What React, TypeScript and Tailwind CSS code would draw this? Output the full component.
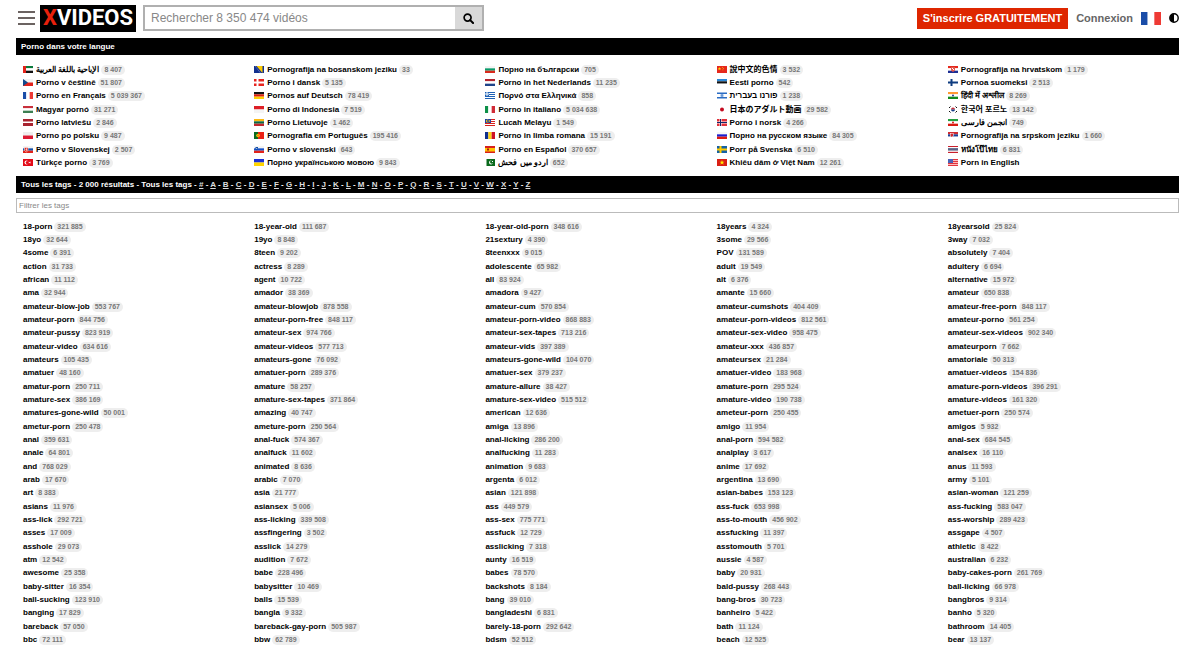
import type { ReactNode } from 'react'

type Item = { name: string; count?: string }
type Language = Item & { flag: string }

// Flags are drawn on a 20x14 canvas
function Rows({ colors }: { colors: string[] }) {
  const h = 14 / colors.length
  return (
    <>
      {colors.map((color, i) => (
        <rect key={i} y={i * h} width="20" height={h} fill={color} />
      ))}
    </>
  )
}

function Cols({ colors }: { colors: string[] }) {
  const w = 20 / colors.length
  return (
    <>
      {colors.map((color, i) => (
        <rect key={i} x={i * w} width={w} height="14" fill={color} />
      ))}
    </>
  )
}

function Cross({ bg, color, inner }: { bg: string; color: string; inner?: string }) {
  return (
    <>
      <rect width="20" height="14" fill={bg} />
      <path d="M5 0h4v14h-4zM0 5h20v4H0z" fill={color} />
      {inner && <path d="M6 0h2v14h-2zM0 6h20v2H0z" fill={inner} />}
    </>
  )
}

const flags: Record<string, ReactNode> = {
  ae: (
    <>
      <Rows colors={['#0b7a3b', '#ffffff', '#111111']} />
      <rect width="6" height="14" fill="#e2231a" />
    </>
  ),
  ba: (
    <>
      <rect width="20" height="14" fill="#12308f" />
      <path d="M5 0h12v14z" fill="#fecb00" />
      <path d="M3 1l10 13" stroke="#ffffff" strokeDasharray="1.5 1.5" />
    </>
  ),
  bg: <Rows colors={['#f4f4f4', '#0b9b6b', '#d9291c']} />,
  cn: (
    <>
      <rect width="20" height="14" fill="#e6281c" />
      <path d="M5 2l1 2.500h2.500l-2 1.500 .8 2.500L5 7l-2.300 1.500 .8-2.500-2-1.500H4z" fill="#ffde00" />
      <path d="M10 2h1.500v1.500H10zM12 4h1.500v1.500H12zM11 7h1.500v1.500H11z" fill="#ffde00" />
    </>
  ),
  hr: (
    <>
      <Rows colors={['#e6281c', '#ffffff', '#1d2f94']} />
      <path d="M6 2h8v7l-4 3-4-3z" fill="#e2574c" />
      <path d="M8 4h2v2H8zM10 6h2v2h-2z" fill="#ffffff" />
    </>
  ),
  cz: (
    <>
      <Rows colors={['#f4f4f4', '#e0221b']} />
      <path d="M0 0l10 7-10 7z" fill="#124a8c" />
    </>
  ),
  dk: <Cross bg="#e6231e" color="#ffffff" />,
  nl: <Rows colors={['#b3242e', '#ffffff', '#1f4489']} />,
  ee: <Rows colors={['#2a87d6', '#111111', '#ffffff']} />,
  fi: <Cross bg="#ffffff" color="#0f3c80" />,
  fr: <Cols colors={['#1a4da8', '#ffffff', '#ee3a34']} />,
  de: <Rows colors={['#111111', '#dd1f10', '#ffce00']} />,
  gr: (
    <>
      <Rows colors={['#1f62b5', '#fff', '#1f62b5', '#fff', '#1f62b5', '#fff', '#1f62b5']} />
      <rect width="8" height="8" fill="#1f62b5" />
      <path d="M3 0h2v8H3zM0 3h8v2H0z" fill="#ffffff" />
    </>
  ),
  il: (
    <>
      <rect width="20" height="14" fill="#ffffff" />
      <path d="M0 1h20v3H0zM0 10h20v3H0z" fill="#2a6cc4" />
      <path d="M10 4.500l2.500 4h-5zM10 9.500l-2.500-4h5z" fill="none" stroke="#2a6cc4" />
    </>
  ),
  in: (
    <>
      <Rows colors={['#ff9933', '#ffffff', '#128a1c']} />
      <circle cx="10" cy="7" r="2" fill="#2a3b98" />
    </>
  ),
  hu: <Rows colors={['#c8303c', '#ffffff', '#3c7f52']} />,
  id: <Rows colors={['#dd1f26', '#f4f4f4']} />,
  it: <Cols colors={['#0d9048', '#ffffff', '#d02a36']} />,
  jp: (
    <>
      <rect width="20" height="14" fill="#ffffff" />
      <circle cx="10" cy="7" r="4" fill="#c40b20" />
    </>
  ),
  kr: (
    <>
      <rect width="20" height="14" fill="#ffffff" />
      <path d="M6 7a4 4 0 0 1 8 0z" fill="#c8303c" />
      <path d="M6 7a4 4 0 0 0 8 0z" fill="#153f88" />
      <path d="M2 4l3-3M15 1l3 3M2 10l3 3M15 13l3-3" stroke="#111111" strokeWidth="2" />
    </>
  ),
  lv: (
    <>
      <rect width="20" height="14" fill="#a8232f" />
      <rect y="5" width="20" height="3" fill="#ffffff" />
    </>
  ),
  lt: <Rows colors={['#fdb913', '#0a6a44', '#c1272d']} />,
  my: (
    <>
      <Rows colors={['#d8201c', '#fff', '#d8201c', '#fff', '#d8201c', '#fff', '#d8201c']} />
      <rect width="12" height="8" fill="#1c3fa8" />
      <circle cx="5" cy="4" r="3" fill="#ffcc00" />
      <circle cx="6" cy="4" r="2" fill="#1c3fa8" />
      <circle cx="9" cy="4" r="1.500" fill="#ffcc00" />
    </>
  ),
  no: <Cross bg="#e0303a" color="#ffffff" inner="#12286a" />,
  ir: (
    <>
      <Rows colors={['#239f40', '#ffffff', '#da1a10']} />
      <circle cx="10" cy="7" r="2" fill="#da1a10" />
    </>
  ),
  pl: <Rows colors={['#eeeeee', '#dc1a34']} />,
  pt: (
    <>
      <rect width="20" height="14" fill="#ea2014" />
      <rect width="8" height="14" fill="#0b6a20" />
      <circle cx="8" cy="7" r="3.500" fill="#ffe000" />
      <rect x="7" y="5" width="2" height="4" fill="#ea2014" />
    </>
  ),
  ro: <Cols colors={['#10308f', '#fcd116', '#ce1126']} />,
  ru: <Rows colors={['#f6f6f6', '#1a1fd0', '#e01a10']} />,
  rs: (
    <>
      <Rows colors={['#d02a30', '#1c3f96', '#ffffff']} />
      <path d="M4 2h7v6l-3.500 4L4 8z" fill="#ffffff" />
      <path d="M5 3h5v5l-2.500 2L5 8z" fill="#d02a30" />
    </>
  ),
  sk: (
    <>
      <Rows colors={['#f4f4f4', '#1450a8', '#e2231a']} />
      <path d="M3 3h7v6l-3.500 3L3 9z" fill="#e2231a" stroke="#ffffff" />
      <path d="M6 4h1v6H6zM5 6h3v1H5z" fill="#ffffff" />
    </>
  ),
  si: (
    <>
      <Rows colors={['#f4f4f4', '#1450c8', '#e2231a']} />
      <path d="M3 2h5v4l-2.500 3L3 6z" fill="#1450a8" />
      <path d="M4 6l1.500-2L7 6z" fill="#ffffff" />
    </>
  ),
  es: (
    <>
      <rect width="20" height="14" fill="#d8201c" />
      <rect y="4" width="20" height="7" fill="#ffc400" />
      <rect x="4" y="5" width="4" height="4" fill="#ad1519" />
    </>
  ),
  se: <Cross bg="#1461a6" color="#fecc00" />,
  vn: (
    <>
      <rect width="20" height="14" fill="#da1f14" />
      <path d="M10 2l1.300 3.500H15l-3 2.200 1.200 3.800L10 9.200l-3.200 2.300L8 7.700 5 5.500h3.700z" fill="#ffee00" />
    </>
  ),
  th: <Rows colors={['#c8202c', '#fff', '#24305e', '#24305e', '#fff', '#c8202c']} />,
  tr: (
    <>
      <rect width="20" height="14" fill="#e30a17" />
      <circle cx="7" cy="7" r="4" fill="#ffffff" />
      <circle cx="8.500" cy="7" r="3" fill="#e30a17" />
      <path d="M11 7l4-2v4z" fill="#ffffff" />
    </>
  ),
  ua: <Rows colors={['#1a2fd8', '#ffd500']} />,
  pk: (
    <>
      <rect x="3" width="17" height="14" fill="#0a6a1c" />
      <circle cx="12" cy="7" r="4" fill="#ffffff" />
      <circle cx="13.500" cy="6" r="3.500" fill="#0a6a1c" />
      <rect x="14" y="4" width="2" height="2" fill="#ffffff" />
    </>
  ),
  us: (
    <>
      <Rows colors={['#e0353f', '#fbb', '#e0353f', '#fbb', '#e0353f', '#fbb', '#e0353f']} />
      <rect width="10" height="8" fill="#4a63b8" />
    </>
  ),
}

const languages: Language[] = [
  { flag: 'ae', name: 'الإباحية باللغة العربية', count: '8 407' },
  { flag: 'ba', name: 'Pornografija na bosanskom jeziku', count: '33' },
  { flag: 'bg', name: 'Порно на български', count: '705' },
  { flag: 'cn', name: '說中文的色情', count: '3 532' },
  { flag: 'hr', name: 'Pornografija na hrvatskom', count: '1 179' },
  { flag: 'cz', name: 'Porno v češtině', count: '51 807' },
  { flag: 'dk', name: 'Porno i dansk', count: '5 135' },
  { flag: 'nl', name: 'Porno in het Nederlands', count: '11 235' },
  { flag: 'ee', name: 'Eesti porno', count: '542' },
  { flag: 'fi', name: 'Pornoa suomeksi', count: '2 513' },
  { flag: 'fr', name: 'Porno en Français', count: '5 039 367' },
  { flag: 'de', name: 'Pornos auf Deutsch', count: '78 419' },
  { flag: 'gr', name: 'Πορνό στα Ελληνικά', count: '858' },
  { flag: 'il', name: 'פורנו בעברית', count: '1 238' },
  { flag: 'in', name: 'हिंदी में अश्लील', count: '8 269' },
  { flag: 'hu', name: 'Magyar pornó', count: '31 271' },
  { flag: 'id', name: 'Porno di Indonesia', count: '7 519' },
  { flag: 'it', name: 'Porno in italiano', count: '5 034 638' },
  { flag: 'jp', name: '日本のアダルト動画', count: '29 582' },
  { flag: 'kr', name: '한국어 포르노', count: '13 142' },
  { flag: 'lv', name: 'Porno latviešu', count: '2 846' },
  { flag: 'lt', name: 'Porno Lietuvoje', count: '1 462' },
  { flag: 'my', name: 'Lucah Melayu', count: '1 549' },
  { flag: 'no', name: 'Porno i norsk', count: '4 266' },
  { flag: 'ir', name: 'انجمن فارسی', count: '749' },
  { flag: 'pl', name: 'Porno po polsku', count: '9 487' },
  { flag: 'pt', name: 'Pornografia em Português', count: '195 416' },
  { flag: 'ro', name: 'Porno in limba romana', count: '15 191' },
  { flag: 'ru', name: 'Порно на русском языке', count: '84 305' },
  { flag: 'rs', name: 'Pornografija na srpskom jeziku', count: '1 660' },
  { flag: 'sk', name: 'Porno v Slovenskej', count: '2 507' },
  { flag: 'si', name: 'Porno v slovenski', count: '643' },
  { flag: 'es', name: 'Porno en Español', count: '370 657' },
  { flag: 'se', name: 'Porr på Svenska', count: '6 510' },
  { flag: 'th', name: 'หนังโป๊ไทย', count: '6 831' },
  { flag: 'tr', name: 'Türkçe porno', count: '3 769' },
  { flag: 'ua', name: 'Порно українською мовою', count: '9 843' },
  { flag: 'pk', name: 'اردو میں فحش', count: '652' },
  { flag: 'vn', name: 'Khiêu dâm ở Việt Nam', count: '12 261' },
  { flag: 'us', name: 'Porn in English' },
]

// One line per row of five tags, "name count" pairs
const tags: Item[] = `
18-porn 321 885|18-year-old 111 687|18-year-old-porn 348 616|18years 4 324|18yearsold 25 824
18yo 32 644|19yo 8 848|21sextury 4 390|3some 29 566|3way 7 032
4some 6 391|8teen 9 202|8teenxxx 9 015|POV 131 589|absolutely 7 404
action 31 733|actress 8 289|adolescente 65 982|adult 19 549|adultery 6 694
african 11 112|agent 10 722|all 83 924|alt 6 376|alternative 15 972
ama 32 944|amador 38 369|amadora 9 427|amante 15 660|amateur 650 838
amateur-blow-job 553 767|amateur-blowjob 878 558|amateur-cum 570 854|amateur-cumshots 404 409|amateur-free-porn 848 117
amateur-porn 844 756|amateur-porn-free 848 117|amateur-porn-video 868 883|amateur-porn-videos 812 561|amateur-porno 561 254
amateur-pussy 823 919|amateur-sex 974 766|amateur-sex-tapes 713 216|amateur-sex-video 958 475|amateur-sex-videos 902 340
amateur-video 634 616|amateur-videos 577 713|amateur-vids 397 389|amateur-xxx 436 857|amateurporn 7 662
amateurs 105 435|amateurs-gone 76 092|amateurs-gone-wild 104 070|amateursex 21 284|amatoriale 50 313
amatuer 48 160|amatuer-porn 289 376|amatuer-sex 379 237|amatuer-video 183 968|amatuer-videos 154 836
amatur-porn 250 711|amature 58 257|amature-allure 38 427|amature-porn 295 524|amature-porn-videos 396 291
amature-sex 386 169|amature-sex-tapes 371 864|amature-sex-video 515 512|amature-video 190 738|amature-videos 161 320
amatures-gone-wild 50 001|amazing 40 747|american 12 636|ameteur-porn 250 455|ametuer-porn 250 574
ametur-porn 250 478|ameture-porn 250 564|amiga 13 896|amigo 11 954|amigos 5 932
anal 359 631|anal-fuck 574 367|anal-licking 286 200|anal-porn 594 582|anal-sex 684 545
anale 64 801|analfuck 11 602|analfucking 11 283|analplay 3 617|analsex 16 110
and 768 029|animated 8 636|animation 9 683|anime 17 692|anus 11 593
arab 17 670|arabic 7 070|argenta 6 012|argentina 13 690|army 5 101
art 8 383|asia 21 777|asian 121 898|asian-babes 153 123|asian-woman 121 259
asians 11 976|asiansex 5 006|ass 449 579|ass-fuck 653 998|ass-fucking 583 047
ass-lick 292 721|ass-licking 339 508|ass-sex 775 771|ass-to-mouth 456 902|ass-worship 289 423
asses 17 009|assfingering 3 502|assfuck 12 729|assfucking 11 397|assgape 4 507
asshole 29 073|asslick 14 279|asslicking 7 318|asstomouth 5 701|athletic 8 422
atm 12 542|audition 7 672|aunty 16 519|aussie 4 587|australian 6 232
awesome 25 358|babe 228 496|babes 78 570|baby 20 931|baby-cakes-porn 261 769
baby-sitter 16 354|babysitter 10 469|backshots 8 184|bald-pussy 268 443|ball-licking 66 978
ball-sucking 123 910|balls 15 539|bang 39 010|bang-bros 30 723|bangbros 9 314
banging 17 829|bangla 9 332|bangladeshi 6 831|banheiro 5 422|banho 5 320
bareback 57 050|bareback-gay-porn 505 987|barely-18-porn 292 642|bath 11 124|bathroom 14 405
bbc 72 111|bbw 62 789|bdsm 52 512|beach 12 525|bear 13 137
`
  .trim()
  .split(/[|\n]/)
  .map((entry) => {
    const space = entry.indexOf(' ')
    return { name: entry.slice(0, space), count: entry.slice(space + 1) }
  })

const letters = '#ABCDEFGHIJKLMNOPQRSTUVWXYZ'.split('')

function Flag({ code, className }: { code: string; className: string }) {
  return (
    <svg viewBox="0 0 20 14" preserveAspectRatio="none" className={className} aria-hidden="true">
      {flags[code]}
    </svg>
  )
}

function TagItem({ name, count, flag }: Item & { flag?: string }) {
  return (
    <li className="h-[13px] nth-[15n]:mb-px">
      <a href="#" className="flex h-[13px] items-center whitespace-nowrap">
        {flag && <Flag code={flag} className="mr-[3px] h-[7px] w-[10px] shrink-0" />}
        <bdi className="leading-[13px]">{name}</bdi>
        {count && (
          <span className="ml-0.5 rounded-full bg-[#eee] px-[3px] text-[7px] leading-[10px] text-[#777]">
            {count}
          </span>
        )}
      </a>
    </li>
  )
}

function Header() {
  return (
    <header className="mb-0.5 flex h-9 items-center">
      <button type="button" aria-label="Menu" className="mr-1 flex w-5 flex-col items-center gap-1">
        <span className="h-0.5 w-[17px] bg-[#6b6361]" />
        <span className="h-0.5 w-[17px] bg-[#6b6361]" />
        <span className="h-0.5 w-[17px] bg-[#6b6361]" />
      </button>
      <a
        href="#"
        className="mr-[7px] flex h-[27px] w-24 items-center justify-center bg-black font-[Roboto,sans-serif] text-[22px] leading-none font-bold text-white"
      >
        <span className="text-[#e8200c]">X</span>VIDEOS
      </a>
      <form className="flex h-[26px] w-[341px] border-2 border-[#b0b0b0]" onSubmit={(e) => e.preventDefault()}>
        <input
          type="text"
          aria-label="Rechercher"
          placeholder="Rechercher 8 350 474 vidéos"
          className="min-w-0 flex-1 px-1.5 text-xs font-normal outline-none placeholder:text-[#888]"
        />
        <button type="submit" aria-label="Lancer la recherche" className="flex w-[27px] items-center justify-center bg-[#d9d9d9]">
          <svg viewBox="0 0 12 12" className="size-[11px]" fill="none" stroke="#000" aria-hidden="true">
            <circle cx="5" cy="5" r="3.800" strokeWidth="1.800" />
            <path d="M7.800 7.800l3.200 3.200" strokeWidth="2.200" strokeLinecap="round" />
          </svg>
        </button>
      </form>
      <div className="ml-auto flex items-center gap-2 text-[11px] font-bold">
        <a href="#" className="flex h-[21px] items-center bg-[#de2600] px-1.5 text-white">
          S'inscrire GRATUITEMENT
        </a>
        <a href="#" className="text-[#666]">
          Connexion
        </a>
        <button type="button" aria-label="Français">
          <Flag code="fr" className="h-[13px] w-5" />
        </button>
        <button type="button" aria-label="Thème">
          <svg viewBox="0 0 10 10" className="size-[10px]" aria-hidden="true">
            <circle cx="5" cy="5" r="4.200" fill="#fff" stroke="#000" strokeWidth="1.400" />
            <path d="M5 1a4 4 0 0 0 0 8z" fill="#000" />
          </svg>
        </button>
      </div>
    </header>
  )
}

export default function App() {
  return (
    <div className="bg-white pr-[21px] pl-4 font-['Liberation_Sans','Noto_Sans_CJK_TC','Noto_Sans_CJK_JP','Noto_Sans_CJK_KR',sans-serif] text-[8px] font-bold text-black">
      <Header />

      <main>
        <h2 className="flex h-[17px] items-center bg-black px-[5px] text-white">Porno dans votre langue</h2>
        <ul className="grid grid-cols-5 pt-2 pb-[7px] pl-[7px]">
          {languages.map((language) => (
            <TagItem key={language.flag} {...language} />
          ))}
        </ul>

        <h2 className="flex h-[17px] items-center bg-black px-[5px] text-white">
          <span>
            Tous les tags - 2 000 résultats - Tous les tags
            {letters.map((letter) => (
              <span key={letter}>
                {' - '}
                <a href="#" className="text-[#ddd] underline">
                  {letter}
                </a>
              </span>
            ))}
          </span>
        </h2>
        <input
          type="text"
          aria-label="Filtrer les tags"
          placeholder="Filtrer les tags"
          className="mt-[5px] block h-[15px] w-full border border-[#bbb] px-[2px] font-normal outline-none placeholder:text-[#888]"
        />
        <ul className="grid grid-cols-5 pt-[7px] pl-[7px]">
          {tags.map((tag) => (
            <TagItem key={tag.name} {...tag} />
          ))}
        </ul>
      </main>
    </div>
  )
}
